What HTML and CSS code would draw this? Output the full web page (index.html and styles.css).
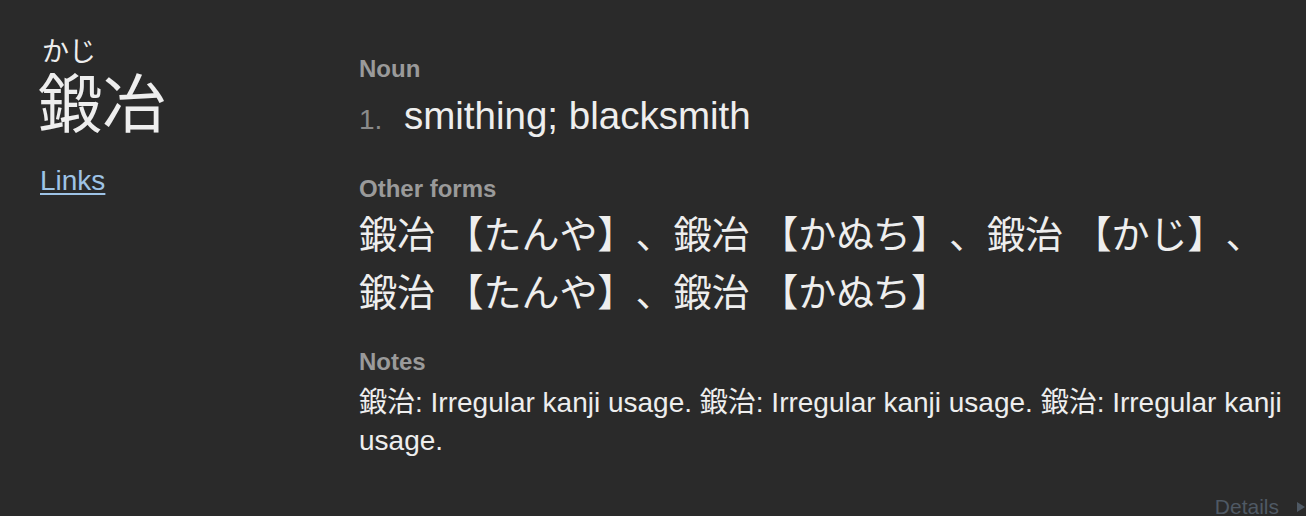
FILE: index.html
```html
<!DOCTYPE html>
<html lang="ja">
<head>
<meta charset="utf-8">
<title>鍛冶</title>
<link rel="stylesheet" href="styles.css">
</head>
<body>
<div class="entry">
  <aside class="head">
    <div class="furigana">かじ</div>
    <div class="word">鍛冶</div>
    <a class="links" href="#">Links</a>
  </aside>
  <main class="meanings">
    <div class="tags">Noun</div>
    <div class="meaning"><span class="num">1.</span><span class="text">smithing; blacksmith</span></div>
    <div class="tags other-label">Other forms</div>
    <div class="forms"><span class="unit">鍛冶 【たんや】</span>、<span class="unit">鍛冶 【かぬち】</span>、<span class="unit">鍛治 【かじ】</span>、<span class="unit">鍛治 【たんや】</span>、<span class="unit">鍛治 【かぬち】</span></div>
    <div class="tags notes-label">Notes</div>
    <div class="notes">鍛治: Irregular kanji usage. 鍛治: Irregular kanji usage. 鍛治: Irregular kanji usage.</div>
    <div class="details"><span class="details-text">Details</span><span class="arrow"></span></div>
  </main>
</div>
</body>
</html>
```

FILE: styles.css
```css
html, body {
  margin: 0;
  padding: 0;
  background: #2a2a2a;
  height: 516px;
  overflow: hidden;
}

body {
  font-family: "Liberation Sans", "Noto Sans CJK JP", sans-serif;
  color: #eeeeee;
}

.entry {
  display: flex;
  padding-left: 40px;
}

.head {
  width: 319px;
  flex: none;
  padding-top: 36px;
  display: flex;
  flex-direction: column;
  align-items: flex-start;
}

.furigana {
  font-size: 27px;
  line-height: 32px;
  padding-left: 2px;
}

.word {
  font-size: 64px;
  line-height: 74px;
  margin-left: -2px;
}

.links {
  margin-top: 23px;
  font-size: 28px;
  line-height: 32px;
  color: #9ec3e6;
  text-decoration: underline;
  text-underline-offset: 3px;
}

.meanings {
  flex: 1;
  padding-top: 55px;
}

.tags {
  font-size: 24px;
  line-height: 28px;
  font-weight: bold;
  color: #9a9a9a;
}

.meaning {
  margin-top: 11px;
  font-size: 38.5px;
  line-height: 44px;
}

.num {
  display: inline-block;
  width: 45px;
  font-size: 28px;
  line-height: 28px;
  color: #8a8a8a;
}

.other-label {
  margin-top: 37px;
}

.forms {
  margin-top: 3px;
  font-size: 38px;
  line-height: 58px;
  text-spacing-trim: space-all;
}

.unit {
  white-space: nowrap;
}

.notes-label {
  margin-top: 26px;
}

.notes {
  margin-top: 8px;
  font-size: 28px;
  line-height: 38px;
}

.details {
  margin-top: 35px;
  display: flex;
  justify-content: flex-end;
  align-items: center;
  font-size: 21px;
  line-height: 24px;
  color: #4f5964;
}

.arrow {
  width: 0;
  height: 0;
  margin-left: 18px;
  margin-right: 1px;
  border-top: 5px solid transparent;
  border-bottom: 5px solid transparent;
  border-left: 8px solid #4f5964;
}
```
